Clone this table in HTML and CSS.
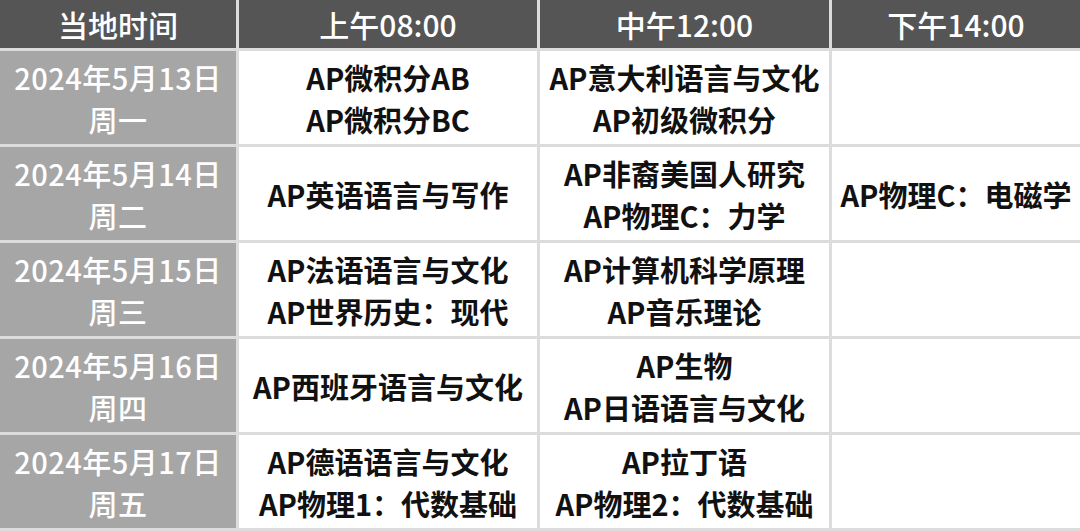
FILE: index.html
```html
<!DOCTYPE html>
<html lang="zh-CN">
<head>
<meta charset="utf-8">
<title>AP考试时间表</title>
<link rel="stylesheet" href="styles.css">
</head>
<body>
<div class="table">
  <div class="th">当地时间</div>
  <div class="th">上午08:00</div>
  <div class="th">中午12:00</div>
  <div class="th">下午14:00</div>

  <div class="date">2024年5月13日<br>周一</div>
  <div class="cell">AP微积分AB<br>AP微积分BC</div>
  <div class="cell">AP意大利语言与文化<br>AP初级微积分</div>
  <div class="cell"></div>

  <div class="date">2024年5月14日<br>周二</div>
  <div class="cell">AP英语语言与写作</div>
  <div class="cell">AP非裔美国人研究<br>AP物理C：力学</div>
  <div class="cell">AP物理C：电磁学</div>

  <div class="date">2024年5月15日<br>周三</div>
  <div class="cell">AP法语语言与文化<br>AP世界历史：现代</div>
  <div class="cell">AP计算机科学原理<br>AP音乐理论</div>
  <div class="cell"></div>

  <div class="date">2024年5月16日<br>周四</div>
  <div class="cell">AP西班牙语言与文化</div>
  <div class="cell">AP生物<br>AP日语语言与文化</div>
  <div class="cell"></div>

  <div class="date">2024年5月17日<br>周五</div>
  <div class="cell">AP德语语言与文化<br>AP物理1：代数基础</div>
  <div class="cell">AP拉丁语<br>AP物理2：代数基础</div>
  <div class="cell"></div>
</div>
</body>
</html>
```

FILE: styles.css
```css
html, body {
  margin: 0;
  padding: 0;
  background: #dcdcdc;
}

.table {
  width: 1080px;
  height: 531px;
  box-sizing: border-box;
  display: grid;
  grid-template-columns: 236px 298px 289px 1fr;
  grid-template-rows: 48px repeat(5, 93px);
  gap: 3px;
  padding-bottom: 3px;
  background: #dcdcdc;
  font-family: "Noto Sans CJK SC", "Noto Sans", sans-serif;
  font-size: 29px;
  line-height: 42px;
}

.th, .date, .cell {
  display: flex;
  align-items: center;
  justify-content: center;
  text-align: center;
}

.th {
  background: #555555;
  color: #ffffff;
  font-weight: 500;
  font-size: 30px;
}

.date {
  background: #a6a6a6;
  color: #ffffff;
  font-weight: 500;
  font-size: 29px;
  letter-spacing: 0.5px;
}

.cell {
  background: #ffffff;
  color: #111111;
  font-weight: 700;
}
```
